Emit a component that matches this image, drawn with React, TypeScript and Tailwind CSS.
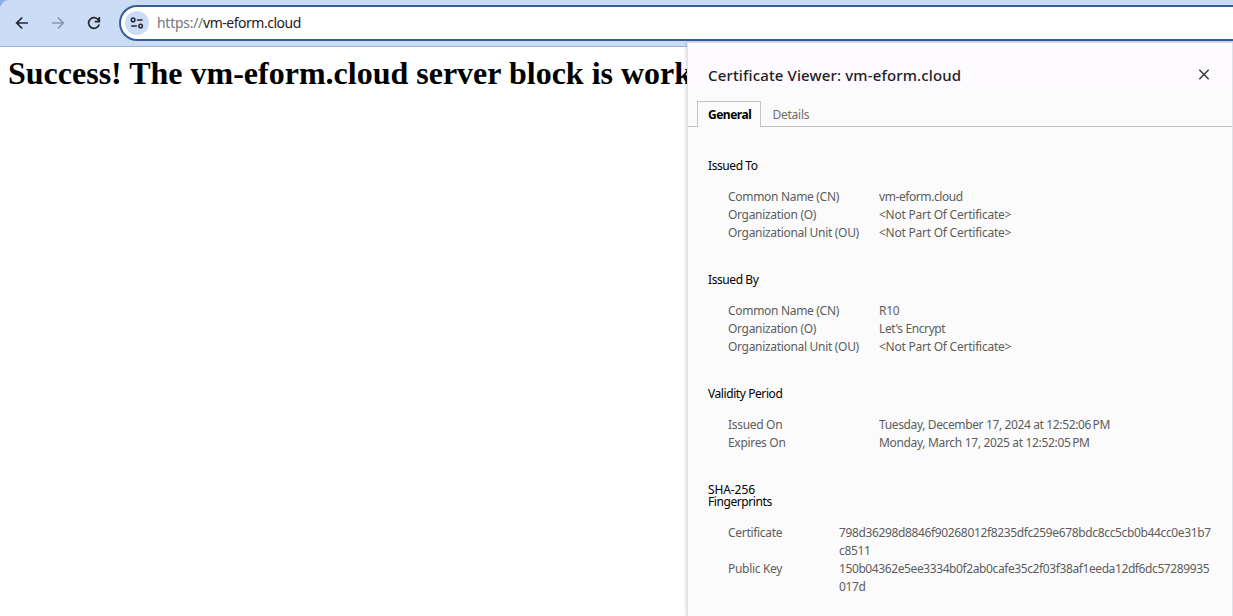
import type { ReactNode } from "react";

type Row = { label: string; value: string; tracking?: string; labelTracking?: string };

function Toolbar() {
  return (
    <header className="h-[47px] w-full shrink-0 bg-linear-to-r from-[#86abec] from-0% to-[#cbdcf7] to-2%">
      <div className="flex h-[47px] items-start overflow-hidden rounded-tl-[9px] border-b border-[#a3b3d3] bg-[#cbdcf7]">
        <div className="flex h-[46px] w-[119px] shrink-0 items-center gap-4 pl-3">
          <svg className="size-5" viewBox="0 0 20 20" fill="none" stroke="#24282e" strokeWidth="1.7">
            <path d="M16 10H4.8M10.2 4.5 4.7 10l5.5 5.5" />
          </svg>
          <svg className="size-5" viewBox="0 0 20 20" fill="none" stroke="#8c97aa" strokeWidth="1.7">
            <path d="M4 10h11.2M9.8 4.5l5.5 5.5-5.5 5.5" />
          </svg>
          <svg className="size-5" viewBox="0 0 20 20" fill="none" stroke="#24282e" strokeWidth="1.7">
            <path d="M15 7.9A5.4 5.4 0 1 0 15.2 11.5M15.3 4v4.6h-4.6" />
          </svg>
        </div>
        <div className="mt-[5px] flex h-9 flex-1 items-center rounded-l-full border-2 border-r-0 border-[#365d9c] bg-white pl-[4px]">
          <span className="flex size-6 items-center justify-center rounded-full bg-[#cbdcf7]">
            <svg className="size-4" viewBox="0 0 16 16" fill="none" stroke="#24282e" strokeWidth="1.5">
              <circle cx="4.1" cy="4.9" r="1.8" />
              <path d="M8 4.9h5.6M2.2 11h5.6" />
              <circle cx="11.6" cy="11" r="1.8" />
            </svg>
          </span>
          <span className="ml-[8px] text-[14px] leading-5 tracking-[-0.48px] text-[#1f2023]">
            <span className="tracking-[-0.28px] text-[#74777c]">https://</span>vm-eform.cloud
          </span>
        </div>
      </div>
    </header>
  );
}

function Section({ title, gap, rows, columns }: { title: ReactNode; gap: string; rows: Row[]; columns: string }) {
  return (
    <section className={gap}>
      <h2 className="text-[12px] leading-3 tracking-[-0.42px] text-black">{title}</h2>
      <dl className={`mt-4 grid pl-5 text-[12px] leading-[18px] text-[#5d5d5d] ${columns}`}>
        {rows.map((row) => (
          <div className="contents" key={row.label}>
            <dt className={row.labelTracking ?? "tracking-[-0.31px]"}>{row.label}</dt>
            <dd className={`break-all ${row.tracking ?? "tracking-[-0.24px]"}`}>{row.value}</dd>
          </div>
        ))}
      </dl>
    </section>
  );
}

const wide = "grid-cols-[151px_1fr]";
const narrow = "grid-cols-[111px_1fr]";
const none = "<Not Part Of Certificate>";

function CertificateViewer() {
  return (
    <aside className="absolute left-[687px] top-[42px] flex h-[574px] w-[546px] flex-col border-x border-t border-[#dfe0ec] bg-[#fbfbfb] shadow-[-1px_0_3px_rgba(0,0,0,0.15)]">
      <div className="flex h-11 shrink-0 items-center justify-between bg-[#fdfbff] pl-5 pr-[22px] pt-5">
        <h1 className="text-[15px] font-medium leading-6 tracking-[0.14px] text-[#1f2023]">Certificate Viewer: vm-eform.cloud</h1>
        <svg className="size-3" viewBox="0 0 12 12" stroke="#37393e" strokeWidth="1.5">
          <path d="m1.3 .8 9.4 9.4m0-9.4L1.3 10.2" />
        </svg>
      </div>
      <nav className="mt-[14px] flex h-[26px] shrink-0 items-end text-[12px]">
        <span className="h-[26px] w-[9px] border-b border-[#c4c4c4]" />
        <span className="h-[26px] w-16 border border-b-0 border-[#c4c4c4] pl-[10px] font-bold leading-[26px] tracking-[-0.5px] text-black">General</span>
        <span className="h-[26px] flex-1 border-b border-[#c4c4c4] pl-[11.5px] leading-[28px] tracking-[-0.25px] text-[#6c6c6c]">Details</span>
      </nav>
      <div className="pl-5 pr-[20px]">
        <Section
          title="Issued To"
          gap="mt-[33px]"
          columns={wide}
          rows={[
            { label: "Common Name (CN)", value: "vm-eform.cloud", tracking: "tracking-[-0.42px]" },
            { label: "Organization (O)", value: none },
            { label: "Organizational Unit (OU)", value: none },
          ]}
        />
        <Section
          title="Issued By"
          gap="mt-8"
          columns={wide}
          rows={[
            { label: "Common Name (CN)", value: "R10" },
            { label: "Organization (O)", value: "Let's Encrypt", tracking: "tracking-[-0.4px]" },
            { label: "Organizational Unit (OU)", value: none },
          ]}
        />
        <Section
          title="Validity Period"
          gap="mt-8"
          columns={wide}
          rows={[
            { label: "Issued On", value: "Tuesday, December 17, 2024 at 12:52:06\u202fPM", tracking: "tracking-[-0.37px]" },
            { label: "Expires On", value: "Monday, March 17, 2025 at 12:52:05\u202fPM", tracking: "tracking-[-0.33px]" },
          ]}
        />
        <Section
          title={<><span className="tracking-[-0.1px]">SHA-256</span><br />Fingerprints</>}
          gap="mt-8"
          columns={narrow}
          rows={[
            { label: "Certificate", value: "798d36298d8846f90268012f8235dfc259e678bdc8cc5cb0b44cc0e31b7c8511", tracking: "tracking-[-0.36px]" },
            { label: "Public Key", value: "150b04362e5ee3334b0f2ab0cafe35c2f03f38af1eeda12df6dc57289935017d", tracking: "tracking-[-0.4px]" },
          ]}
        />
      </div>
    </aside>
  );
}

export default function App() {
  return (
    <div className="relative flex h-[616px] w-[1233px] flex-col overflow-hidden bg-white font-['Noto_Sans',sans-serif]">
      <Toolbar />
      <main className="w-[688px] overflow-hidden pl-2 pt-[8px]">
        <h1 className="whitespace-nowrap font-['Liberation_Serif',serif] text-[32px] font-bold leading-9 text-black">
          Success! The vm-eform.cloud server block is working!
        </h1>
      </main>
      <CertificateViewer />
    </div>
  );
}
